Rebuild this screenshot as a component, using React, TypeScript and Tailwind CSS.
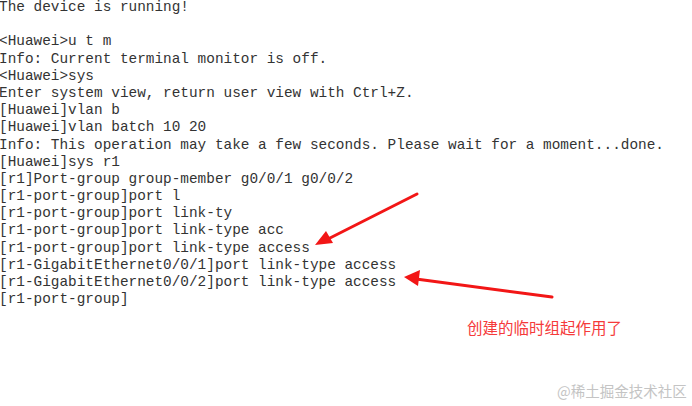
import React from "react";

const lines = [
  "The device is running!",
  "",
  "<Huawei>u t m",
  "Info: Current terminal monitor is off.",
  "<Huawei>sys",
  "Enter system view, return user view with Ctrl+Z.",
  "[Huawei]vlan b",
  "[Huawei]vlan batch 10 20",
  "Info: This operation may take a few seconds. Please wait for a moment...done.",
  "[Huawei]sys r1",
  "[r1]Port-group group-member g0/0/1 g0/0/2",
  "[r1-port-group]port l",
  "[r1-port-group]port link-ty",
  "[r1-port-group]port link-type acc",
  "[r1-port-group]port link-type access",
  "[r1-GigabitEthernet0/0/1]port link-type access",
  "[r1-GigabitEthernet0/0/2]port link-type access",
  "[r1-port-group]",
];

export default function App() {
  return (
    <div className="relative w-[692px] h-[406px] overflow-hidden bg-white">
      <pre
        className="m-0 ml-[-1px] mt-[-1px] text-[14.4px] leading-[17.2px] text-[#333333] whitespace-pre"
        style={{ fontFamily: '"Liberation Mono", "Courier New", monospace' }}
      >
        {lines.map((l, i) => (
          <div key={i} className="h-[17.2px]">
            {l}
          </div>
        ))}
      </pre>

      <svg className="absolute left-0 top-0" width="692" height="406" viewBox="0 0 692 406">
        <g stroke="#f21616" strokeWidth="3" strokeLinecap="round" fill="none">
          <line x1="417" y1="194" x2="328" y2="239" />
          <line x1="552" y1="297" x2="416" y2="279" />
        </g>
        <g fill="#f21616">
          <polygon points="315,245 326,231 333,243" />
          <polygon points="404,277 420,270 418,286" />
        </g>
      </svg>

      <div
        className="absolute left-[467px] top-[316px] text-[15.5px] leading-[22px] text-[#f53a3a]"
        style={{ fontFamily: '"Noto Sans CJK SC", "Noto Sans", sans-serif' }}
      >
        创建的临时组起作用了
      </div>

      <div
        className="absolute left-[557px] top-[381px] text-[14.5px] leading-[20px] text-[#c4c4c4]"
        style={{ fontFamily: '"Noto Sans CJK SC", "Noto Sans", sans-serif' }}
      >
        @稀土掘金技术社区
      </div>
    </div>
  );
}
